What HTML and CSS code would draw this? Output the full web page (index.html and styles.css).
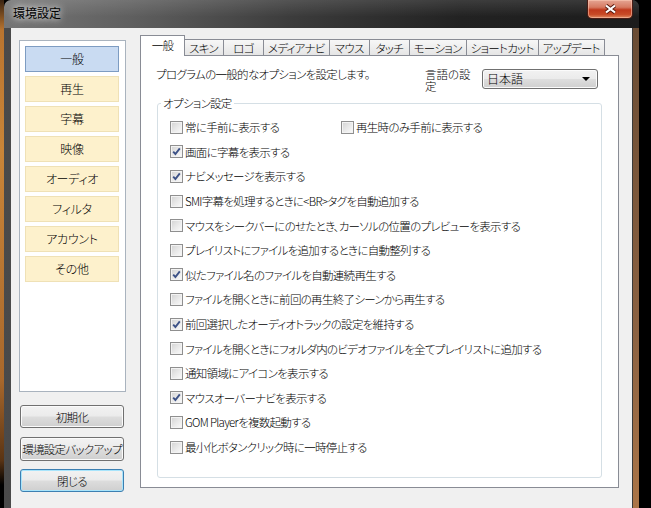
FILE: index.html
```html
<!DOCTYPE html>
<html lang="ja">
<head>
<meta charset="utf-8">
<title>環境設定</title>
<link rel="stylesheet" href="styles.css">
</head>
<body>
<div class="screen">
  <div class="desk-left"></div>
  <div class="window">
    <div class="titlebar">
      <span class="title">環境設定</span>
      <button class="close" aria-label="閉じる">
        <svg width="13" height="10" viewBox="0 0 13 10"><path class="x-out" d="M2 1.5 L11 8.5 M11 1.5 L2 8.5"/><path class="x-in" d="M2 1.5 L11 8.5 M11 1.5 L2 8.5"/></svg>
      </button>
    </div>
    <div class="client">
      <div class="sidebar">
        <ul class="cat-list">
          <li class="cat active">一般</li>
          <li class="cat">再生</li>
          <li class="cat">字幕</li>
          <li class="cat">映像</li>
          <li class="cat">オーディオ</li>
          <li class="cat">フィルタ</li>
          <li class="cat">アカウント</li>
          <li class="cat">その他</li>
        </ul>
        <button class="btn btn-reset">初期化</button>
        <button class="btn btn-backup">環境設定バックアップ</button>
        <button class="btn btn-close is-default">閉じる</button>
      </div>
      <div class="tabs">
        <div class="tab-strip">
          <div class="tab selected">一般</div>
          <div class="tab">スキン</div>
          <div class="tab">ロゴ</div>
          <div class="tab">メディアナビ</div>
          <div class="tab">マウス</div>
          <div class="tab">タッチ</div>
          <div class="tab">モーション</div>
          <div class="tab">ショートカット</div>
          <div class="tab">アップデート</div>
        </div>
        <div class="tab-panel">
          <div class="panel-head">
            <p class="desc">プログラムの一般的なオプションを設定します。</p>
            <div class="lang">
              <span class="lang-label">言語の設定</span>
              <div class="select"><span class="select-text">日本語</span><span class="arrow"></span></div>
            </div>
          </div>
          <fieldset class="group">
            <legend>オプション設定</legend>
            <div class="row two">
              <label class="opt"><span class="cb"></span>常に手前に表示する</label>
              <label class="opt"><span class="cb"></span>再生時のみ手前に表示する</label>
            </div>
            <div class="row"><label class="opt"><span class="cb checked"><svg viewBox="0 0 11 11"><path d="M2.2 5.6 L4.4 8 L8.8 2.4"/></svg></span>画面に字幕を表示する</label></div>
            <div class="row"><label class="opt"><span class="cb checked"><svg viewBox="0 0 11 11"><path d="M2.2 5.6 L4.4 8 L8.8 2.4"/></svg></span>ナビメッセージを表示する</label></div>
            <div class="row"><label class="opt"><span class="cb"></span>SMI字幕を処理するときに&lt;BR&gt;タグを自動追加する</label></div>
            <div class="row"><label class="opt"><span class="cb"></span>マウスをシークバーにのせたとき、カーソルの位置のプレビューを表示する</label></div>
            <div class="row"><label class="opt"><span class="cb"></span>プレイリストにファイルを追加するときに自動整列する</label></div>
            <div class="row"><label class="opt"><span class="cb checked"><svg viewBox="0 0 11 11"><path d="M2.2 5.6 L4.4 8 L8.8 2.4"/></svg></span>似たファイル名のファイルを自動連続再生する</label></div>
            <div class="row"><label class="opt"><span class="cb"></span>ファイルを開くときに前回の再生終了シーンから再生する</label></div>
            <div class="row"><label class="opt"><span class="cb checked"><svg viewBox="0 0 11 11"><path d="M2.2 5.6 L4.4 8 L8.8 2.4"/></svg></span>前回選択したオーディオトラックの設定を維持する</label></div>
            <div class="row"><label class="opt"><span class="cb"></span>ファイルを開くときにフォルダ内のビデオファイルを全てプレイリストに追加する</label></div>
            <div class="row"><label class="opt"><span class="cb"></span>通知領域にアイコンを表示する</label></div>
            <div class="row"><label class="opt"><span class="cb checked"><svg viewBox="0 0 11 11"><path d="M2.2 5.6 L4.4 8 L8.8 2.4"/></svg></span>マウスオーバーナビを表示する</label></div>
            <div class="row"><label class="opt"><span class="cb"></span>GOM Playerを複数起動する</label></div>
            <div class="row"><label class="opt"><span class="cb"></span>最小化ボタンクリック時に一時停止する</label></div>
          </fieldset>
        </div>
      </div>
    </div>
  </div>
</div>
</body>
</html>
```

FILE: styles.css
```css
* { box-sizing: border-box; }

html, body {
  margin: 0;
  padding: 0;
  background: #000;
}

body {
  width: 651px;
  height: 508px;
  overflow: hidden;
  font-family: "Noto Sans CJK JP", "Noto Sans", sans-serif;
  font-size: 11.5px;
  font-weight: 300;
  letter-spacing: -0.7px;
  font-feature-settings: "palt";
  color: #000;
}

.screen {
  display: flex;
  width: 651px;
  height: 508px;
}

.desk-left {
  width: 4px;
  height: 100%;
  background: linear-gradient(to bottom, #3a2412 0, #b8742f 30px, #c98538 150px, #a8682c 380px, #5a3414 460px, #000 485px);
}

.window {
  width: 635px;
  height: 508px;
  display: flex;
  flex-direction: column;
  border-radius: 7px 7px 0 0;
  padding: 0 7px;
  background:
    linear-gradient(to bottom, #6a4c34, #8c6242 60%, #b07848) right 0 top 28px / 6px 100% no-repeat,
    linear-gradient(to right, #4a4a4a, #3a3a3a 50%, #3a3a3a 100%);
  overflow: hidden;
}

.titlebar {
  height: 28px;
  margin: 0 -7px;
  display: flex;
  align-items: flex-start;
  background:
    linear-gradient(to bottom, rgba(255,255,255,0.12), rgba(255,255,255,0) 60%),
    linear-gradient(to right, #767676 0%, #5f5f5f 20%, #3c3c3c 45%, #222 72%, #1c1c1c 100%);
  border-radius: 7px 7px 0 0;
}

.title {
  margin: 6px 0 0 9px;
  line-height: 14px;
  font-size: 12px;
  font-weight: 400;
  letter-spacing: 0;
  color: #000;
  text-shadow: 0 0 6px rgba(255,255,255,0.85), 0 0 10px rgba(255,255,255,0.6);
}

.close {
  margin-left: auto;
  margin-right: 6px;
  width: 46px;
  height: 19px;
  padding: 0;
  border: 1px solid #4a1c14;
  border-top: none;
  border-radius: 0 0 5px 5px;
  background: linear-gradient(to bottom, #e5a593 0%, #d67a62 40%, #c0391c 55%, #c84a26 80%, #e08a60 100%);
  box-shadow: inset 0 0 0 1px rgba(255,210,190,0.5);
  display: flex;
  align-items: center;
  justify-content: center;
}

.close svg { display: block; }
.close .x-out { stroke: #5a1c10; stroke-width: 4; fill: none; }
.close .x-in { stroke: #fff; stroke-width: 2.2; fill: none; }

.client {
  flex: 1;
  background: #f0f0f0;
  display: flex;
  align-items: flex-start;
  padding: 7px 0 0 8px;
}

/* sidebar */
.sidebar {
  width: 107px;
  margin-top: 5px;
  display: flex;
  flex-direction: column;
}

.cat-list {
  list-style: none;
  margin: 0;
  padding: 5px;
  height: 352px;
  background: #fff;
  border: 1px solid #a9b3be;
}

.cat {
  width: 94px;
  height: 26px;
  margin-bottom: 4px;
  display: flex;
  align-items: center;
  justify-content: center;
  background: #fdf1cc;
  border: 1px solid #efe1b6;
  line-height: 12px;
  font-size: 12px;
  letter-spacing: -0.3px;
}

.cat.active {
  background: #c9dbf2;
  border-color: #7d9cc2;
}

.btn {
  display: flex;
  align-items: center;
  justify-content: center;
  width: 104px;
  margin-left: 1px;
  padding: 0;
  font: inherit;
  font-feature-settings: "palt";
  letter-spacing: inherit;
  line-height: 12px;
  color: #000;
  border: 1px solid #707070;
  border-radius: 3px;
  background: linear-gradient(to bottom, #f2f2f2 0%, #ebebeb 48%, #dddddd 52%, #cfcfcf 100%);
  box-shadow: inset 0 0 0 1px #fbfbfb;
  white-space: nowrap;
}

.btn-reset { margin-top: 13px; height: 23px; }
.btn-backup { margin-top: 9px; height: 24px; }
.btn-close { margin-top: 8px; height: 23px; }

.btn.is-default {
  border-color: #3c7fb1;
  box-shadow: inset 0 0 0 1px #a8e4fb;
}

/* tabs */
.tabs {
  width: 479px;
  margin-left: 14px;
  display: flex;
  flex-direction: column;
}

.tab-strip {
  display: flex;
  align-items: flex-end;
  height: 21px;
  margin-bottom: -1px;
  position: relative;
  z-index: 1;
}

.tab {
  height: 16px;
  margin-bottom: 1px;
  margin-left: -1px;
  min-width: 41px;
  padding: 0 4px;
  display: flex;
  align-items: center;
  justify-content: center;
  line-height: 12px;
  white-space: nowrap;
  border: 1px solid #898c95;
  border-bottom: none;
  background: linear-gradient(to bottom, #f7f7f7, #e5e5e5);
}

.tab.selected {
  height: 21px;
  margin-bottom: 0;
  margin-left: 0;
  min-width: 45px;
  background: #fff;
  padding-bottom: 2px;
  position: relative;
  z-index: 2;
  margin-right: -1px;
}

.tab-panel {
  height: 433px;
  border: 1px solid #898c95;
  background: #fff;
  display: flex;
  flex-direction: column;
}

.panel-head {
  display: flex;
  align-items: flex-start;
  padding: 12px 20px 0 15px;
}

.desc {
  margin: 0;
  line-height: 12px;
}

.lang {
  margin-left: auto;
  display: flex;
  align-items: flex-start;
  gap: 9px;
}

.lang-label {
  width: 48px;
  line-height: 12px;
  letter-spacing: 0;
}

.select {
  width: 116px;
  height: 20px;
  margin-top: 1px;
  display: flex;
  align-items: center;
  padding: 0 7px 0 4px;
  border: 1px solid #707070;
  border-radius: 3px;
  background: linear-gradient(to bottom, #f2f2f2 0%, #ebebeb 48%, #dddddd 52%, #cfcfcf 100%);
  box-shadow: inset 0 0 0 1px #fbfbfb;
  line-height: 12px;
  font-size: 12px;
  letter-spacing: 0;
}

.arrow {
  margin-left: auto;
  width: 0;
  height: 0;
  border-left: 4px solid transparent;
  border-right: 4px solid transparent;
  border-top: 4px solid #000;
}

.group {
  flex: 1;
  min-width: 0;
  margin: 5px 16px 9px;
  padding: 6px 0 0 3px;
  border: 1px solid #d5dfe5;
  border-radius: 3px;
}

.group legend {
  padding: 0 2px;
  line-height: 12px;
}

.row {
  height: 24.6px;
  padding-left: 9px;
  display: flex;
  align-items: center;
}

.row.two {
  display: grid;
  grid-template-columns: 171px 1fr;
  align-items: center;
}

.opt {
  display: flex;
  align-items: center;
  line-height: 12px;
  white-space: nowrap;
}

.cb {
  width: 13px;
  height: 13px;
  margin-right: 2px;
  flex: none;
  border: 1px solid #8f8f8f;
  background: linear-gradient(135deg, #d2d2d2 0%, #e8e8e8 50%, #fbfbfb 100%);
  box-shadow: inset 0 0 0 1px #f3f3f3;
  display: flex;
  align-items: center;
  justify-content: center;
}

.cb svg {
  width: 11px;
  height: 11px;
  display: block;
}

.cb svg path {
  fill: none;
  stroke: #3d5287;
  stroke-width: 1.9;
}
```
